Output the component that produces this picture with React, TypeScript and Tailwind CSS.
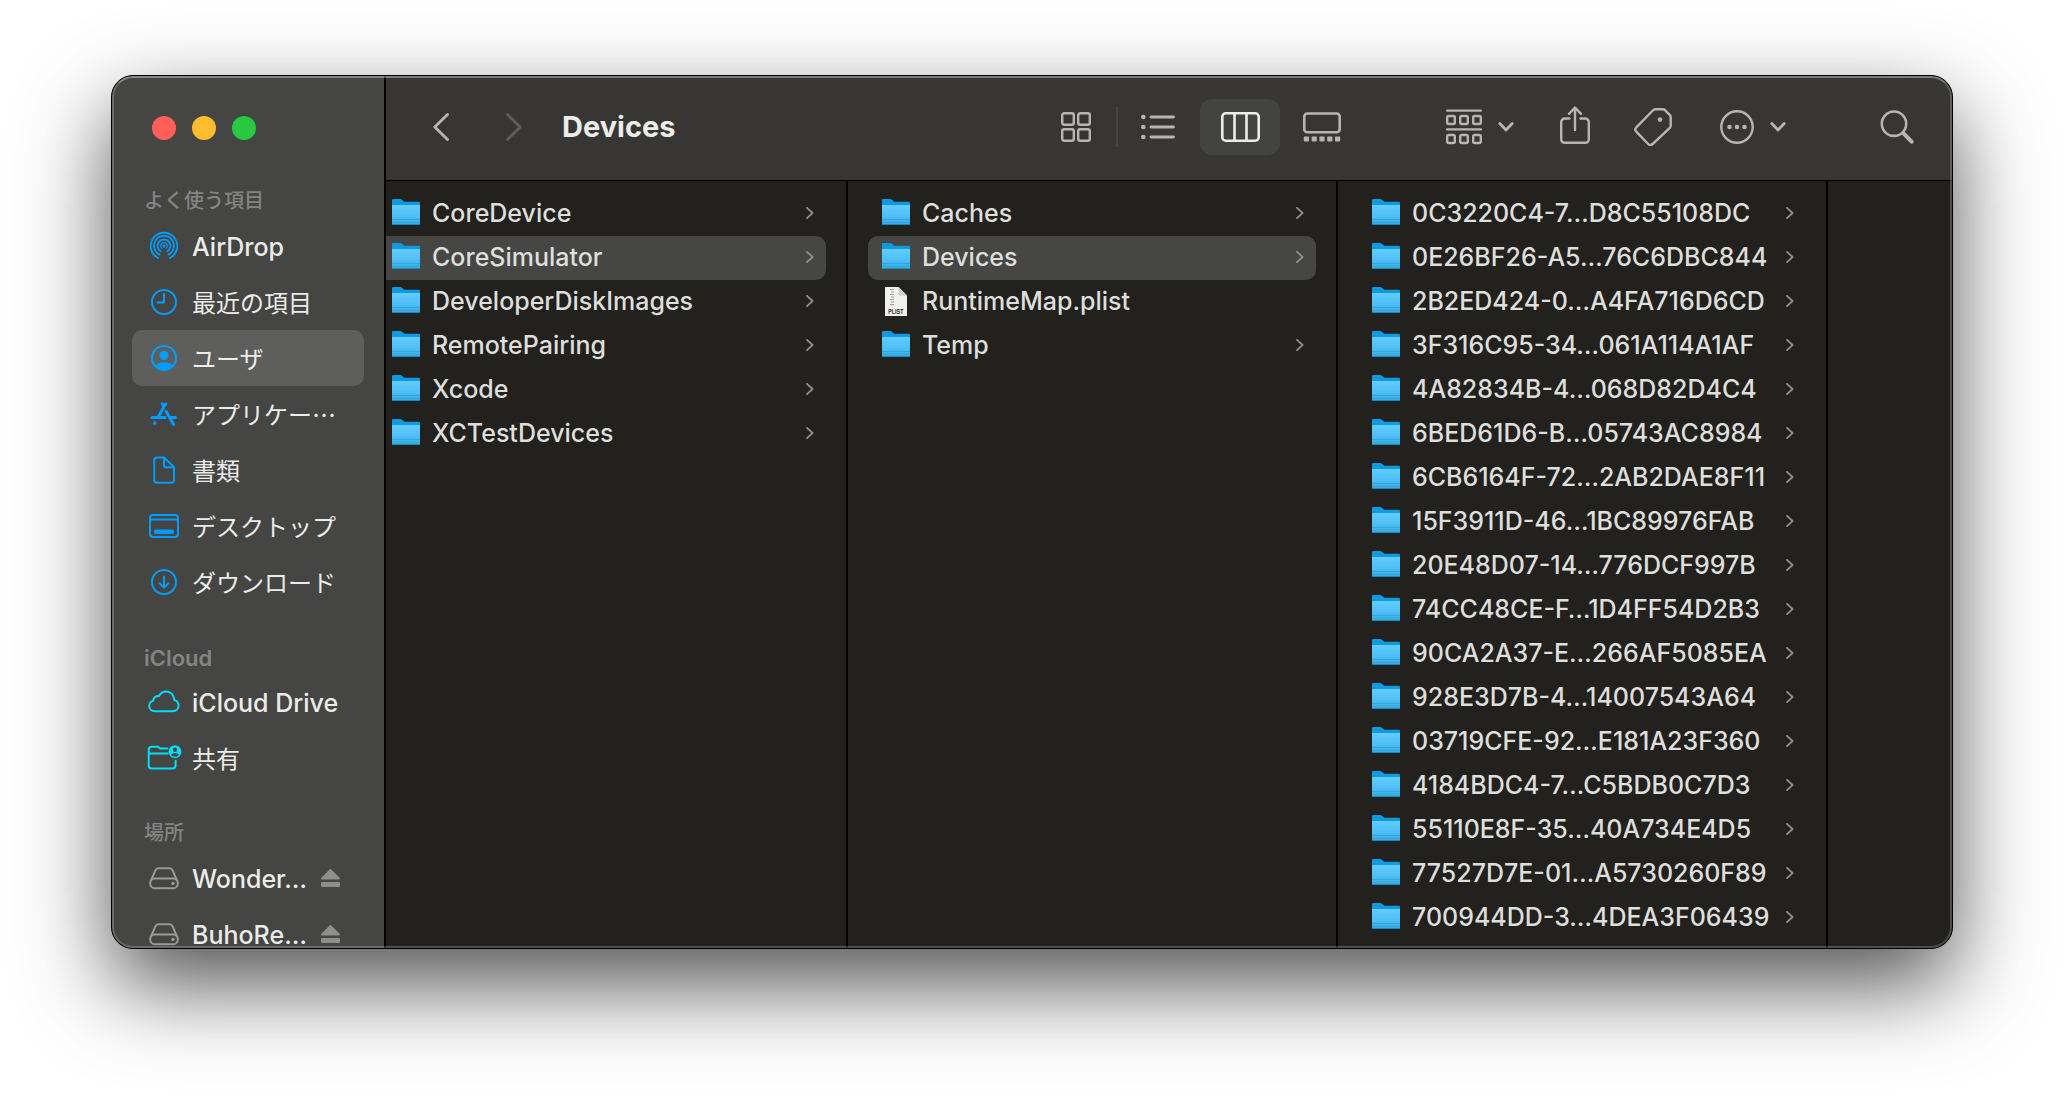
import { useState } from "react";
import type { ReactNode } from "react";

type Entry = { name: string; kind?: "plist" };

const DEVELOPER: Entry[] = [
  { name: "CoreDevice" },
  { name: "CoreSimulator" },
  { name: "DeveloperDiskImages" },
  { name: "RemotePairing" },
  { name: "Xcode" },
  { name: "XCTestDevices" },
];

const CORE_SIMULATOR: Entry[] = [
  { name: "Caches" },
  { name: "Devices" },
  { name: "RuntimeMap.plist", kind: "plist" },
  { name: "Temp" },
];

const DEVICES: Entry[] = [
  { name: "0C3220C4-7…D8C55108DC" },
  { name: "0E26BF26-A5…76C6DBC844" },
  { name: "2B2ED424-0…A4FA716D6CD" },
  { name: "3F316C95-34…061A114A1AF" },
  { name: "4A82834B-4…068D82D4C4" },
  { name: "6BED61D6-B…05743AC8984" },
  { name: "6CB6164F-72…2AB2DAE8F11" },
  { name: "15F3911D-46…1BC89976FAB" },
  { name: "20E48D07-14…776DCF997B" },
  { name: "74CC48CE-F…1D4FF54D2B3" },
  { name: "90CA2A37-E…266AF5085EA" },
  { name: "928E3D7B-4…14007543A64" },
  { name: "03719CFE-92…E181A23F360" },
  { name: "4184BDC4-7…C5BDB0C7D3" },
  { name: "55110E8F-35…40A734E4D5" },
  { name: "77527D7E-01…A5730260F89" },
  { name: "700944DD-3…4DEA3F06439" },
];

const stroke = {
  fill: "none",
  stroke: "currentColor",
  strokeWidth: 2,
  strokeLinecap: "round",
  strokeLinejoin: "round",
} as const;

/* Sidebar icons, all on a 32px box */
const AirDropIcon = () => (
  <svg className="size-8 shrink-0" viewBox="0 0 32 32" {...stroke} strokeWidth={1.8} aria-hidden>
    <path d="M10.2 28A13.3 13.3 0 1 1 21.8 28" />
    <path d="M11.5 24.6A9.9 9.9 0 1 1 20.5 24.6" />
    <path d="M12.6 21.3A6.4 6.4 0 1 1 19.4 21.3" />
    <path d="M14 18.4A3.2 3.2 0 1 1 18 18.4" strokeWidth={1.2} />
    <circle cx="16" cy="16" r="1.5" fill="currentColor" stroke="none" />
  </svg>
);

const ClockIcon = () => (
  <svg className="size-8 shrink-0" viewBox="0 0 32 32" {...stroke} aria-hidden>
    <circle cx="16" cy="16" r="12" />
    <path d="M16 8v8.600h-6.800" />
  </svg>
);

const UserIcon = () => (
  <svg className="size-8 shrink-0" viewBox="0 0 32 32" {...stroke} aria-hidden>
    <circle cx="16" cy="16" r="12" />
    <circle cx="16" cy="13.500" r="4.500" fill="currentColor" stroke="none" />
    <path d="M7.500 23.500C9 21.300 12 20.200 16 20.200s7 1.100 8.500 3.300C22.300 26.200 19.400 28 16 28s-6.300-1.800-8.500-4.500z" fill="currentColor" stroke="none" />
  </svg>
);

const AppsIcon = () => (
  <svg className="size-8 shrink-0" viewBox="0 0 32 32" {...stroke} strokeWidth={3} aria-hidden>
    <path d="M17.800 5.800 10.300 18.800M14.200 5.800l1.800 3M18 13.200 25.700 26.400M4 19.600h13M23.500 19.600h4M6.600 25.400l.4-.7" />
  </svg>
);

const DocIcon = () => (
  <svg className="size-8 shrink-0" viewBox="0 0 32 32" {...stroke} aria-hidden>
    <path d="M9 3.500h7.200L26 13.200V26a2.800 2.800 0 0 1-2.800 2.800H9A2.800 2.800 0 0 1 6.200 26V6.300A2.800 2.800 0 0 1 9 3.500z" />
    <path d="M16 4v7.200c0 1.300.8 2.100 2.100 2.100H25.500" />
  </svg>
);

const DesktopIcon = () => (
  <svg className="size-8 shrink-0" viewBox="0 0 32 32" {...stroke} aria-hidden>
    <rect x="2" y="5" width="28" height="22" rx="3" />
    <path d="M2 9.500h28" />
    <rect x="6.200" y="19.400" width="19.600" height="4.600" rx="1" fill="currentColor" stroke="none" />
  </svg>
);

const DownloadIcon = () => (
  <svg className="size-8 shrink-0" viewBox="0 0 32 32" {...stroke} aria-hidden>
    <circle cx="16" cy="16" r="12" />
    <path d="M16 10.500v10.800M11.600 17.300l4.400 4.300 4.400-4.300" />
  </svg>
);

const CloudIcon = () => (
  <svg className="size-8 shrink-0 overflow-visible" viewBox="0 0 32 32" {...stroke} aria-hidden>
    <path d="M7 25.200h17.600c3.500 0 6-2.400 6-5.600 0-2.700-1.700-4.900-4.300-5.500C26 9 22.700 5.400 18.300 5.400c-3.300 0-5.900 1.800-7.300 4.600-3.200-.4-5.500 1.500-5.800 4.600C2.800 15.400 1.200 17.300 1.200 19.700c0 3.200 2.500 5.500 5.800 5.500z" />
  </svg>
);

const SharedIcon = () => (
  <svg className="size-8 shrink-0 overflow-visible" viewBox="0 0 32 32" {...stroke} aria-hidden>
    <path d="M19.500 6.600h-7.300L10 4.700H3.800C1.900 4.700.7 5.800.7 7.700v15.800c0 1.900 1.200 3 3.100 3h20.700c1.900 0 3.100-1.100 3.100-3v-4.700" />
    <path d="M1 11.600h18.800" />
    <circle cx="27" cy="9.600" r="6.400" fill="currentColor" stroke="none" />
    <circle cx="27" cy="7.800" r="2.200" fill="#454543" stroke="none" />
    <path d="M23 13.200c.7-1.400 2.100-2.100 4-2.100s3.300.7 4 2.100c-1 .9-2.300 1.400-4 1.400s-3-.5-4-1.400z" fill="#454543" stroke="none" />
  </svg>
);

const DriveIcon = () => (
  <svg className="size-8 shrink-0" viewBox="0 0 32 32" {...stroke} aria-hidden>
    <rect x="2.200" y="16.600" width="27.600" height="9.600" rx="4.500" />
    <path d="M3 18.500 7.400 8.300c.6-1.400 1.500-2.100 3-2.100h11.200c1.500 0 2.400.7 3 2.100L29 18.500" />
    <circle cx="25" cy="21.400" r="1.700" fill="currentColor" stroke="none" />
  </svg>
);

const EjectIcon = () => (
  <svg className="h-[18px] w-[19px]" viewBox="0 0 19 18" fill="currentColor" aria-hidden>
    <path d="M8.600.4a1.300 1.300 0 0 1 1.800 0l8.200 8.300c.7.8.3 1.800-.8 1.800H1.200C.1 10.500-.3 9.500.4 8.700z" />
    <rect y="13" width="19" height="5" rx="1.200" />
  </svg>
);

/* File icons */
const FolderIcon = () => (
  <svg className="size-7 shrink-0" viewBox="0 0 28 28" aria-hidden>
    <defs>
      <linearGradient id="folder-front" x1="0" y1="0" x2="0" y2="1">
        <stop offset="0" stopColor="#62ccfe" />
        <stop offset="0.550" stopColor="#4ebff6" />
        <stop offset="1" stopColor="#38abe2" />
      </linearGradient>
    </defs>
    <path d="M0 1.200C0 .5.500 0 1.200 0h7c.8 0 1.300.2 1.800.7l1.700 1.600c.4.4.8.5 1.400.5h13.700c.7 0 1.200.5 1.200 1.200V24H0z" fill="#109ade" />
    <path d="M0 6h28v18.800c0 .7-.5 1.200-1.200 1.200H1.200C.5 26 0 25.500 0 24.800z" fill="url(#folder-front)" />
    <path d="M0 20.500h28M0 23.300h28" stroke="#2b9fd8" strokeWidth="0.700" />
    <path d="M0 25.500h28" stroke="#168ac4" strokeWidth="1" />
  </svg>
);

const PlistIcon = () => (
  <svg className="h-[29px] w-7 shrink-0" viewBox="0 0 28 29" aria-hidden>
    <path d="M3 0h13.500L25 8.500V29H3z" fill="#f0f0ee" />
    <path d="M16.500 0 25 8.500h-7.300c-.8 0-1.200-.4-1.200-1.200z" fill="#cfcfcd" />
    <path d="M8 2.500h4M9 5h3M8 7.500h4M9 10h3M8 12.500h4M9 15h3M8 17.500h4" stroke="#9a9a98" strokeWidth="1.200" />
    <text x="14" y="26.500" textAnchor="middle" fontSize="5.500" fontWeight="700" fill="#333" fontFamily="Inter, sans-serif">
      PLIST
    </text>
  </svg>
);

const RowChevron = () => (
  <svg className="h-3 w-2 shrink-0 text-[#8f8f8c]" viewBox="0 0 8 12" {...stroke} strokeWidth={1.8} aria-hidden>
    <path d="M1 0.800 6.600 6 1 11.200" />
  </svg>
);

const SmallChevronDown = () => (
  <svg className="h-3 w-4" viewBox="0 0 16 12" {...stroke} strokeWidth={2.800} aria-hidden>
    <path d="M1.800 2.500 8 9l6.200-6.500" />
  </svg>
);

const VIEWS: { id: string; label: string; icon: ReactNode }[] = [
  {
    id: "icons",
    label: "アイコン",
    icon: (
      <svg className="h-[30px] w-[30px]" viewBox="0 0 30 30" {...stroke} strokeWidth={2.400} aria-hidden>
        <rect x="1.200" y="1.200" width="11.600" height="11.600" rx="2" />
        <rect x="17.200" y="1.200" width="11.600" height="11.600" rx="2" />
        <rect x="1.200" y="17.200" width="11.600" height="11.600" rx="2" />
        <rect x="17.200" y="17.200" width="11.600" height="11.600" rx="2" />
      </svg>
    ),
  },
  {
    id: "list",
    label: "リスト",
    icon: (
      <svg className="h-[30px] w-[34px]" viewBox="0 0 34 30" {...stroke} strokeWidth={2.800} aria-hidden>
        <path d="M10 5h22.500M10 15h22.500M10 25h22.500" />
        <g fill="currentColor" stroke="none">
          <circle cx="2.300" cy="5" r="2.300" />
          <circle cx="2.300" cy="15" r="2.300" />
          <circle cx="2.300" cy="25" r="2.300" />
        </g>
      </svg>
    ),
  },
  {
    id: "columns",
    label: "カラム",
    icon: (
      <svg className="h-[30px] w-[39px]" viewBox="0 0 39 30" {...stroke} strokeWidth={2.600} aria-hidden>
        <rect x="1.300" y="1.300" width="36.400" height="27.400" rx="3.500" />
        <path d="M13.500 1.500v27M25.500 1.500v27" />
      </svg>
    ),
  },
  {
    id: "gallery",
    label: "ギャラリー",
    icon: (
      <svg className="h-[30px] w-[38px]" viewBox="0 0 38 30" {...stroke} strokeWidth={2.600} aria-hidden>
        <rect x="1.300" y="1.500" width="35.400" height="18.800" rx="3" />
        <g fill="currentColor" stroke="none">
          <rect x="0.800" y="24.500" width="5.200" height="5" rx="0.800" />
          <rect x="8.600" y="24.500" width="5.200" height="5" rx="0.800" />
          <rect x="16.400" y="24.500" width="5.200" height="5" rx="0.800" />
          <rect x="24.200" y="24.500" width="5.200" height="5" rx="0.800" />
          <rect x="32" y="24.500" width="5.200" height="5" rx="0.800" />
        </g>
      </svg>
    ),
  },
];

const GroupIcon = () => (
  <svg className="h-9 w-9" viewBox="0 0 36 36" {...stroke} strokeWidth={2.400} aria-hidden>
    <path d="M1.200 1.600h33.600M1.200 20.400h33.600" />
    <rect x="1.200" y="7" width="7.600" height="8" rx="1.500" />
    <rect x="14.200" y="7" width="7.600" height="8" rx="1.500" />
    <rect x="27.200" y="7" width="7.600" height="8" rx="1.500" />
    <rect x="1.200" y="26" width="7.600" height="8" rx="1.500" />
    <rect x="14.200" y="26" width="7.600" height="8" rx="1.500" />
    <rect x="27.200" y="26" width="7.600" height="8" rx="1.500" />
  </svg>
);

const ShareIcon = () => (
  <svg className="h-[38px] w-[30px]" viewBox="0 0 30 38" {...stroke} strokeWidth={2.400} aria-hidden>
    <path d="M9.500 12.500H5c-2.300 0-3.800 1.500-3.800 3.800v16.600c0 2.300 1.500 3.800 3.800 3.800h20c2.300 0 3.800-1.500 3.800-3.800V16.300c0-2.300-1.500-3.800-3.800-3.800h-4.500" />
    <path d="M15 24V2M9 7.800 15 1.600l6 6.200" />
  </svg>
);

const TagIcon = () => (
  <svg className="h-[38px] w-[38px]" viewBox="0 0 38 38" {...stroke} strokeWidth={2.400} aria-hidden>
    <path d="M21.500 1.300h7.500c.9 0 1.600.3 2.200 1l4.500 4.600c.7.700 1 1.400 1 2.300v8.400c0 1-.4 1.900-1.100 2.600L18.600 36c-1.500 1.400-3 1.400-4.400 0L2.300 23.700c-1.400-1.500-1.400-2.800 0-4.300L18.800 2.500c.8-.8 1.600-1.200 2.700-1.200z" />
    <circle cx="26" cy="11.600" r="2.300" fill="currentColor" stroke="none" />
  </svg>
);

const MoreIcon = () => (
  <svg className="h-[34px] w-[34px]" viewBox="0 0 34 34" {...stroke} strokeWidth={2.400} aria-hidden>
    <circle cx="17" cy="17" r="15.700" />
    <g fill="currentColor" stroke="none">
      <circle cx="9.500" cy="17" r="2.300" />
      <circle cx="17" cy="17" r="2.300" />
      <circle cx="24.500" cy="17" r="2.300" />
    </g>
  </svg>
);

const SearchIcon = () => (
  <svg className="h-[34px] w-[34px]" viewBox="0 0 34 34" {...stroke} strokeWidth={2.600} aria-hidden>
    <circle cx="14" cy="13.700" r="12.200" />
    <path d="m23.300 23.200 8.300 8.500" strokeWidth={4} />
  </svg>
);

const SidebarHeading = ({ children, latin }: { children: ReactNode; latin?: boolean }) => (
  <h2
    className={`h-9 pl-3 text-[#848482] ${latin ? "text-[22px] leading-10 font-semibold" : "text-[20px] leading-[38px] font-medium"}`}
  >
    {children}
  </h2>
);

function SidebarItem({ icon, label, latin, active, tint = "text-[#009dff]", eject }: {
  icon: ReactNode;
  label: string;
  latin?: boolean;
  active?: boolean;
  tint?: string;
  eject?: boolean;
}) {
  return (
    <li className={`flex h-14 items-center rounded-[10px] pr-6 pl-4 ${active ? "bg-[#5e5e5c]" : ""}`}>
      <a href="#" aria-current={active ? "page" : undefined} className="flex min-w-0 flex-1 items-center gap-3">
        <span className={tint}>{icon}</span>
        <span
          lang="ja"
          className={
            latin
              ? "pt-0.5 text-[25px] leading-8 font-medium whitespace-nowrap"
              : "font-['Noto_Sans_CJK_JP',sans-serif] text-[24px] leading-8 whitespace-nowrap"
          }
        >
          {label}
        </span>
      </a>
      {eject && (
        <button type="button" aria-label={`${label}を取り出す`} className="text-[#8e8e8c]">
          <EjectIcon />
        </button>
      )}
    </li>
  );
}

function Column({ label, entries, selected, first }: {
  label: string;
  entries: Entry[];
  selected?: string;
  first?: boolean;
}) {
  return (
    <ul
      aria-label={label}
      className={`shrink-0 overflow-hidden border-r-2 border-black pt-[11px] pr-5 ${first ? "w-[462px]" : "w-[490px] pl-5"}`}
    >
      {entries.map((entry) => (
        <li key={entry.name}>
          <button
            type="button"
            className={`flex h-11 w-full items-center gap-3 pr-3 pb-0.5 text-left ${first ? "rounded-r-[10px] pl-1.5" : "rounded-[10px] pl-3.5"} ${
              entry.name === selected ? "bg-[#464644]" : ""
            }`}
          >
            {entry.kind === "plist" ? <PlistIcon /> : <FolderIcon />}
            <span className="min-w-0 flex-1 text-[25px] leading-8 font-medium whitespace-nowrap text-[#dededc]">
              {entry.name}
            </span>
            {entry.kind !== "plist" && <RowChevron />}
          </button>
        </li>
      ))}
    </ul>
  );
}

export default function App() {
  const [view, setView] = useState("columns");

  return (
    <div className="h-screen bg-white px-[111px] pt-[75px] pb-[147px] font-['Inter','Noto_Sans_CJK_JP',sans-serif] text-[#ecece9]">
      <div className="relative flex h-full overflow-hidden rounded-[22px] border border-black bg-[#22211d] shadow-[0_36px_88px_rgba(0,0,0,0.68)]">
        {/* Sidebar */}
        <aside className="w-[274px] shrink-0 overflow-hidden border-r-2 border-black bg-[#454543] px-5 pt-10">
          <div className="flex gap-4 pl-5">
            <button type="button" aria-label="閉じる" className="size-6 rounded-full bg-[#ff5f57]" />
            <button type="button" aria-label="しまう" className="size-6 rounded-full bg-[#febc2e]" />
            <button type="button" aria-label="拡大" className="size-6 rounded-full bg-[#28c840]" />
          </div>
          <nav className="mt-[42px] flex flex-col gap-7">
            <section>
              <SidebarHeading>よく使う項目</SidebarHeading>
              <ul>
                <SidebarItem icon={<AirDropIcon />} label="AirDrop" latin />
                <SidebarItem icon={<ClockIcon />} label="最近の項目" />
                <SidebarItem icon={<UserIcon />} label="ユーザ" active />
                <SidebarItem icon={<AppsIcon />} label="アプリケー…" />
                <SidebarItem icon={<DocIcon />} label="書類" />
                <SidebarItem icon={<DesktopIcon />} label="デスクトップ" />
                <SidebarItem icon={<DownloadIcon />} label="ダウンロード" />
              </ul>
            </section>
            <section>
              <SidebarHeading latin>iCloud</SidebarHeading>
              <ul>
                <SidebarItem icon={<CloudIcon />} label="iCloud Drive" latin tint="text-[#00e0f8]" />
                <SidebarItem icon={<SharedIcon />} label="共有" tint="text-[#00e0f8]" />
              </ul>
            </section>
            <section>
              <SidebarHeading>場所</SidebarHeading>
              <ul>
                <SidebarItem icon={<DriveIcon />} label="Wonder…" latin tint="text-[#999997]" eject />
                <SidebarItem icon={<DriveIcon />} label="BuhoRe…" latin tint="text-[#999997]" eject />
              </ul>
            </section>
          </nav>
        </aside>

        <main className="flex min-w-0 flex-1 flex-col">
          {/* Toolbar */}
          <header className="flex h-[105px] shrink-0 items-center border-b border-black bg-[#383634] pr-[38px] pb-0.5 pl-[35px] text-[#b6b5b3]">
            <button type="button" aria-label="戻る" className="flex h-14 w-10 items-center justify-center">
              <svg className="h-7 w-4" viewBox="0 0 16 28" {...stroke} strokeWidth={2.800} aria-hidden>
                <path d="M14.500 1.500 1.800 14l12.700 12.500" />
              </svg>
            </button>
            <button type="button" aria-label="進む" disabled className="ml-[33px] flex h-14 w-10 items-center justify-center text-[#5e5d5b]">
              <svg className="h-7 w-4" viewBox="0 0 16 28" {...stroke} strokeWidth={2.800} aria-hidden>
                <path d="M1.500 1.500 14.200 14 1.500 26.500" />
              </svg>
            </button>
            <h1 className="ml-7 flex-1 text-[29px] leading-9 font-bold text-[#ecece9]">Devices</h1>

            <div className="flex items-center" role="group" aria-label="表示">
              {VIEWS.map((v, i) => (
                <div key={v.id} className="flex items-center">
                  {i > 0 && <span className={`h-10 w-0.5 ${i === 1 ? "bg-[#464644]" : ""}`} />}
                  <button
                    type="button"
                    aria-label={v.label}
                    aria-pressed={view === v.id}
                    onClick={() => setView(v.id)}
                    className={`flex h-14 w-20 items-center justify-center rounded-xl ${view === v.id ? "bg-[#434341] text-[#ecece9]" : ""}`}
                  >
                    {v.icon}
                  </button>
                </div>
              ))}
            </div>

            <button type="button" aria-label="グループ" className="ml-[84px] flex items-center gap-4">
              <GroupIcon />
              <SmallChevronDown />
            </button>
            <button type="button" aria-label="共有" className="ml-[46px] pb-1">
              <ShareIcon />
            </button>
            <button type="button" aria-label="タグ" className="ml-11">
              <TagIcon />
            </button>
            <button type="button" aria-label="アクション" className="ml-12 flex items-center gap-4">
              <MoreIcon />
              <SmallChevronDown />
            </button>
            <button type="button" aria-label="検索" className="ml-[94px]">
              <SearchIcon />
            </button>
          </header>

          {/* Column browser */}
          <div className="flex min-h-0 flex-1 overflow-hidden">
            <Column label="Developer" entries={DEVELOPER} selected="CoreSimulator" first />
            <Column label="CoreSimulator" entries={CORE_SIMULATOR} selected="Devices" />
            <Column label="Devices" entries={DEVICES} />
            <div className="flex-1" />
          </div>
        </main>

        {/* Light rim inside the window edge */}
        <div className="pointer-events-none absolute inset-0 rounded-[21px] border-2 border-white/20 border-t-white/35" />
      </div>
    </div>
  );
}
